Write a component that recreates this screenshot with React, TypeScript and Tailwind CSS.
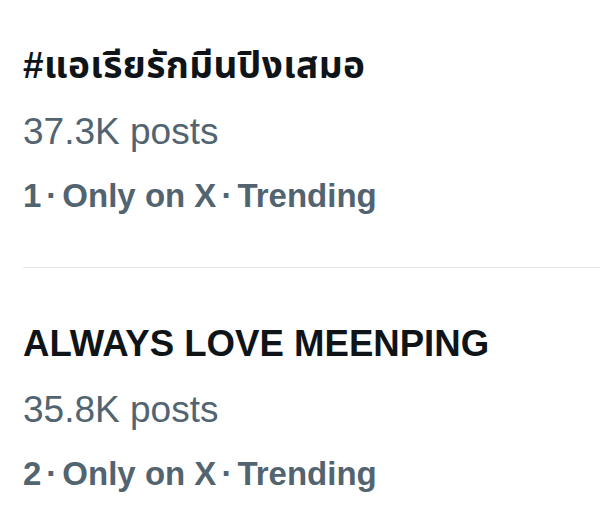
import React from "react";

type Trend = {
  rank: number;
  title: string;
  posts: string;
  thai?: boolean;
};

const trends: Trend[] = [
  { rank: 1, title: "#แอเรียรักมีนปิงเสมอ", posts: "37.3K posts", thai: true },
  { rank: 2, title: "ALWAYS LOVE MEENPING", posts: "35.8K posts" },
];

const Dot = () => <span className="mx-[5px]">·</span>;

const TrendItem = ({ trend }: { trend: Trend }) => {
  return (
    <div>
      <div
        className={
          trend.thai
            ? "text-[37px] leading-[44px] font-bold text-[#0f1419] tracking-[0.4px]"
            : "text-[36.6px] leading-[44px] font-bold text-[#0f1419]"
        }
      >
        {trend.title}
      </div>
      <div className="mt-[22px] text-[37px] leading-[44px] text-[#536471]">
        {trend.posts}
      </div>
      <div className="mt-[22px] text-[33px] leading-[40px] font-bold text-[#536471]">
        {trend.rank}
        <Dot />
        Only on X
        <Dot />
        Trending
      </div>
    </div>
  );
};

export default function App() {
  return (
    <div
      className="w-[600px] h-[529px] overflow-hidden bg-white pl-[23px] pt-[44px]"
      style={{ fontFamily: '"Liberation Sans", "Noto Sans Thai", "Noto Sans", sans-serif' }}
    >
      <TrendItem trend={trends[0]} />
      <div className="mt-[51px] mb-[54px] border-t border-[#e3e6e8]" />
      <TrendItem trend={trends[1]} />
    </div>
  );
}
